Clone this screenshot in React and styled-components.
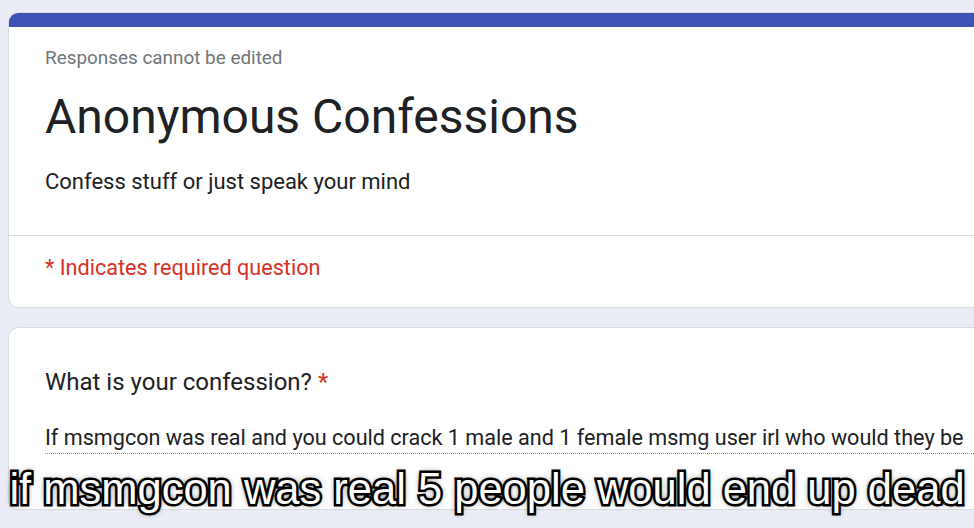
import React from "react";
import styled, { createGlobalStyle } from "styled-components";

const Global = createGlobalStyle`
  html, body { margin: 0; padding: 0; background: #eaedf6; }
  body { font-family: Roboto, "Liberation Sans", sans-serif; overflow: hidden; }
`;

const Page = styled.div`
  position: relative;
  width: 974px;
  height: 528px;
  overflow: hidden;
  padding: 12px 0 0 8px;
  box-sizing: border-box;
  display: flex;
  flex-direction: column;
  gap: 19px;
`;

const Card = styled.div`
  background: #fff;
  border: 1px solid #dadce0;
  border-right: none;
  border-radius: 10px 0 0 10px;
  overflow: hidden;
  display: flex;
  flex-direction: column;
`;

const TopBar = styled.div`
  height: 15px;
  background: #3f51b5;
  margin: -1px 0 0 -1px;
`;

const Header = styled.div`
  padding: 20px 36px 0 36px;
  display: flex;
  flex-direction: column;
  height: 208px;
  box-sizing: border-box;
`;

const Note = styled.div`
  font-size: 18.9px;
  color: #70757a;
  line-height: 22px;
`;

const Title = styled.h1`
  margin: 18px 0 0;
  font-size: 48px;
  font-weight: 400;
  color: #202124;
  line-height: 60px;
`;

const Desc = styled.div`
  margin-top: 20px;
  font-size: 22px;
  color: #202124;
  line-height: 30px;
`;

const Divider = styled.div`
  height: 1px;
  background: #dadce0;
`;

const Required = styled.div`
  padding: 19px 36px 0;
  height: 71px;
  box-sizing: border-box;
  font-size: 21.6px;
  color: #d93025;
  line-height: 26px;
`;

const QuestionCard = styled(Card)`
  height: 183px;
  padding: 38px 0 0 36px;
  box-sizing: border-box;
`;

const Question = styled.div`
  font-size: 24px;
  color: #202124;
  line-height: 32px;
`;

const Star = styled.span`
  color: #d93025;
`;

const Answer = styled.div`
  margin-top: 26px;
  font-size: 21.6px;
  color: #202124;
  line-height: 28px;
  padding-bottom: 1px;
  border-bottom: 1px dotted #80868b;
  white-space: nowrap;
`;

const Caption = styled.div`
  position: absolute;
  left: 0;
  right: 0;
  top: 464px;
  text-align: center;
  font-family: "Liberation Sans", Arial, sans-serif;
  font-size: 43.5px;
  color: #fff;
  line-height: 50px;
  white-space: nowrap;
  -webkit-text-stroke: 5px #000;
  paint-order: stroke fill;
  text-shadow: 0 0 3px #000, 0 0 6px rgba(0, 0, 0, 0.8);
`;

export default function App() {
  return (
    <>
      <Global />
      <Page>
        <Card>
          <TopBar />
          <Header>
            <Note>Responses cannot be edited</Note>
            <Title>Anonymous Confessions</Title>
            <Desc>Confess stuff or just speak your mind</Desc>
          </Header>
          <Divider />
          <Required>* Indicates required question</Required>
        </Card>
        <QuestionCard>
          <Question>
            What is your confession? <Star>*</Star>
          </Question>
          <Answer>
            If msmgcon was real and you could crack 1 male and 1 female msmg user irl who would they be
          </Answer>
        </QuestionCard>
        <Caption>if msmgcon was real 5 people would end up dead</Caption>
      </Page>
    </>
  );
}
